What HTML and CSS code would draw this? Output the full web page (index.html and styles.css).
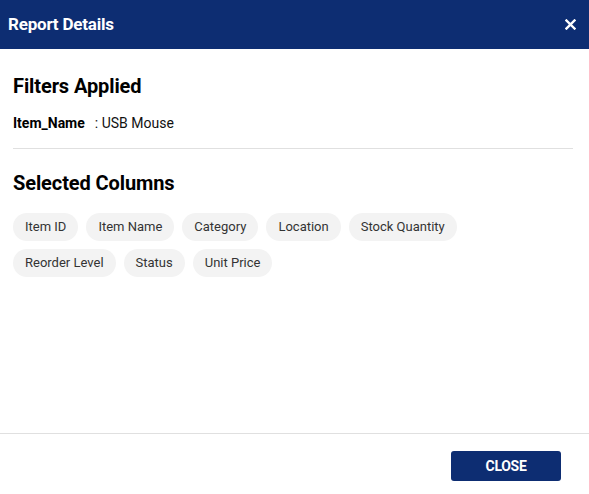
FILE: index.html
```html
<!DOCTYPE html>
<html>
<head>
<meta charset="utf-8">
<link rel="stylesheet" href="styles.css">
</head>
<body>
<div class="dialog">
  <header class="dialog-header">
    <h1 class="dialog-title">Report Details</h1>
    <button class="close-icon" aria-label="Close">
      <svg width="11" height="11" viewBox="0 0 11 11"><path d="M1.5 1.5 L9.5 9.5 M9.5 1.5 L1.5 9.5" stroke="#fff" stroke-width="2.4" stroke-linecap="square"/></svg>
    </button>
  </header>
  <main class="dialog-body">
    <section class="section">
      <h2 class="section-title">Filters Applied</h2>
      <div class="filter-row"><span class="filter-key">Item_Name</span><span class="filter-value">: USB Mouse</span></div>
    </section>
    <hr class="divider">
    <section class="section">
      <h2 class="section-title">Selected Columns</h2>
      <div class="chips">
        <span class="chip">Item ID</span>
        <span class="chip">Item Name</span>
        <span class="chip">Category</span>
        <span class="chip">Location</span>
        <span class="chip">Stock Quantity</span>
        <span class="chip">Reorder Level</span>
        <span class="chip">Status</span>
        <span class="chip">Unit Price</span>
      </div>
    </section>
  </main>
  <footer class="dialog-footer">
    <button class="btn-close">CLOSE</button>
  </footer>
</div>
</body>
</html>
```
FILE: styles.css
```css
* { box-sizing: border-box; }
html, body { margin: 0; padding: 0; }
body {
  font-family: Roboto, "Liberation Sans", Arial, sans-serif;
  background: #fff;
  color: #000;
  width: 589px;
  height: 494px;
  overflow: hidden;
}
.dialog {
  display: flex;
  flex-direction: column;
  height: 494px;
}
.dialog-header {
  height: 49px;
  background: #0d2d72;
  display: flex;
  align-items: center;
  justify-content: space-between;
  padding: 0 13px 2px 8px;
  flex-shrink: 0;
}
.dialog-title {
  margin: 0;
  color: #fff;
  font-size: 17px;
  font-weight: 700;
  letter-spacing: -0.2px;
}
.close-icon {
  background: none;
  border: 0;
  padding: 0;
  width: 11px;
  height: 11px;
  display: flex;
  margin-top: 1px;
}
.dialog-body {
  flex: 1;
  padding: 24px 16px 0 13px;
}
.section-title {
  margin: 0;
  font-size: 20px;
  font-weight: 700;
  line-height: 26px;
  letter-spacing: -0.1px;
}
.filter-row {
  margin-top: 14px;
  font-size: 14px;
  line-height: 20px;
  display: flex;
}
.filter-key { font-weight: 700; margin-right: 10px; }
.filter-value { color: #111; }
.divider {
  border: 0;
  border-top: 1px solid #e0e0e0;
  margin: 15px 0 21px;
}
.chips {
  margin-top: 17px;
  display: flex;
  flex-wrap: wrap;
  gap: 8px;
  max-width: 540px;
}
.chip {
  background: #f3f3f3;
  border-radius: 14px;
  height: 28px;
  line-height: 28px;
  padding: 0 12px;
  font-size: 13px;
  color: #333;
}
.dialog-footer {
  border-top: 1px solid #e0e0e0;
  height: 61px;
  display: flex;
  justify-content: flex-end;
  align-items: flex-start;
  padding: 17px 28px 0 0;
  flex-shrink: 0;
}
.btn-close {
  width: 110px;
  height: 30px;
  background: #0d2d72;
  color: #fff;
  border: 0;
  border-radius: 3px;
  font-family: Roboto, "Liberation Sans", Arial, sans-serif;
  font-size: 14px;
  font-weight: 700;
  letter-spacing: -0.3px;
}
```
